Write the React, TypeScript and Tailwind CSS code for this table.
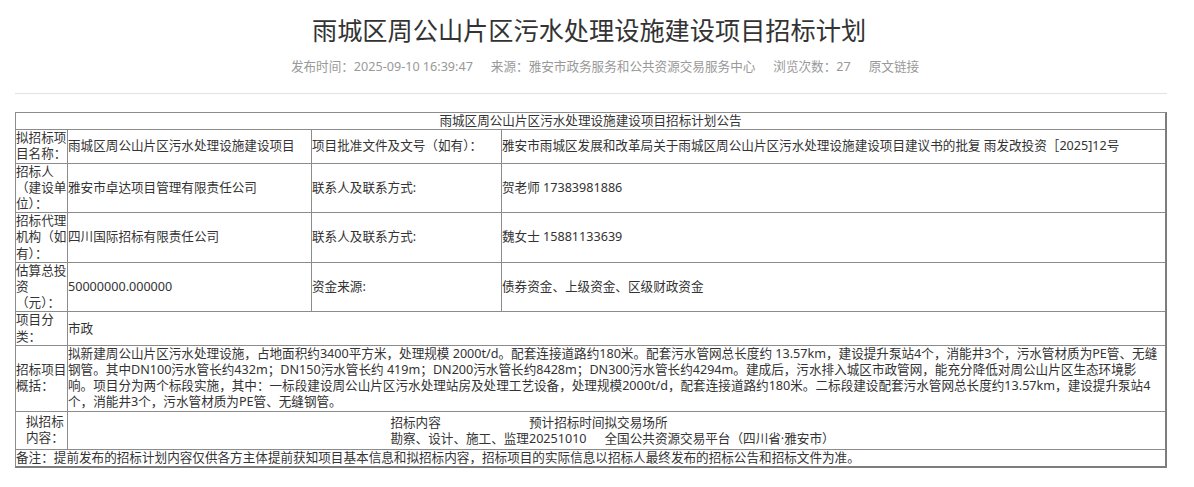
import React from "react";

const FONT = { fontFamily: '"Noto Sans", "Noto Sans CJK SC", sans-serif' };

export default function App() {
  return (
    <div className="w-[1178px] bg-white text-[#333]" style={FONT}>
      <h1 className="pt-[12px] text-center text-[25.2px] leading-[36px] font-normal text-[#333]">
        雨城区周公山片区污水处理设施建设项目招标计划
      </h1>
      <div className="mt-[10px] flex justify-center gap-[18px] pl-[32px] text-[12.6px] leading-[18px] text-[#999]">
        <span>发布时间：2025-09-10 16:39:47</span>
        <span>来源：雅安市政务服务和公共资源交易服务中心</span>
        <span>浏览次数：27</span>
        <span>原文链接</span>
      </div>
      <div className="ml-[15px] w-[1152px]">
        <div className="mt-[17px] h-px bg-[#e3e3e3]" />
        <div className="mt-[18px] grid grid-cols-[52px_244px_190px_1fr] border-l border-t border-[#8c8c8c] border-r-2 border-b-2 border-r-[#7d7d7d] border-b-[#7d7d7d] text-[12.6px] leading-[16.2px] text-[#333]">
          <div className="col-span-4 border-b border-[#8c8c8c] text-center">
            雨城区周公山片区污水处理设施建设项目招标计划公告
          </div>

          <div className="flex items-center border-r border-b border-[#8c8c8c]">拟招标项目名称：</div>
          <div className="flex items-center border-r border-b border-[#8c8c8c]">雨城区周公山片区污水处理设施建设项目</div>
          <div className="flex items-center border-r border-b border-[#8c8c8c]">项目批准文件及文号（如有）：</div>
          <div className="flex items-center border-b border-[#8c8c8c]">
            雅安市雨城区发展和改革局关于雨城区周公山片区污水处理设施建设项目建议书的批复 雨发改投资［2025]12号
          </div>

          <div className="flex items-center border-r border-b border-[#8c8c8c]">招标人（建设单位）：</div>
          <div className="flex items-center border-r border-b border-[#8c8c8c]">雅安市卓达项目管理有限责任公司</div>
          <div className="flex items-center border-r border-b border-[#8c8c8c]">联系人及联系方式:</div>
          <div className="flex items-center border-b border-[#8c8c8c]">贺老师 17383981886</div>

          <div className="flex items-center border-r border-b border-[#8c8c8c]">招标代理机构（如有）：</div>
          <div className="flex items-center border-r border-b border-[#8c8c8c]">四川国际招标有限责任公司</div>
          <div className="flex items-center border-r border-b border-[#8c8c8c]">联系人及联系方式:</div>
          <div className="flex items-center border-b border-[#8c8c8c]">魏女士 15881133639</div>

          <div className="flex items-center border-r border-b border-[#8c8c8c]">估算总投资（元）：</div>
          <div className="flex items-center border-r border-b border-[#8c8c8c]">50000000.000000</div>
          <div className="flex items-center border-r border-b border-[#8c8c8c]">资金来源:</div>
          <div className="flex items-center border-b border-[#8c8c8c]">债券资金、上级资金、区级财政资金</div>

          <div className="flex items-center border-r border-b border-[#8c8c8c]">项目分类：</div>
          <div className="col-span-3 flex items-center border-b border-[#8c8c8c]">市政</div>

          <div className="flex items-center border-r border-b border-[#8c8c8c]">招标项目概括：</div>
          <div className="col-span-3 border-b border-[#8c8c8c] whitespace-nowrap">
            拟新建周公山片区污水处理设施，占地面积约3400平方米，处理规模 2000t/d。配套连接道路约180米。配套污水管网总长度约 13.57km，建设提升泵站4个，消能井3个，污水管材质为PE管、无缝
            <br />
            钢管。其中DN100污水管长约432m；DN150污水管长约 419m；DN200污水管长约8428m；DN300污水管长约4294m。建成后，污水排入城区市政管网，能充分降低对周公山片区生态环境影
            <br />
            响。项目分为两个标段实施，其中：一标段建设周公山片区污水处理站房及处理工艺设备，处理规模2000t/d，配套连接道路约180米。二标段建设配套污水管网总长度约13.57km，建设提升泵站4
            <br />
            个，消能井3个，污水管材质为PE管、无缝钢管。
          </div>

          <div className="flex items-center border-r border-b border-[#8c8c8c] pl-[10px]">拟招标内容：</div>
          <div className="col-span-3 flex items-center justify-center border-b border-[#8c8c8c] pt-[3px] pb-[2px] pr-[8px]">
            <div className="grid grid-cols-[auto_auto_auto]">
              <div>招标内容</div>
              <div>预计招标时间</div>
              <div>拟交易场所</div>
              <div>勘察、设计、施工、监理</div>
              <div>20251010</div>
              <div>全国公共资源交易平台（四川省·雅安市）</div>
            </div>
          </div>

          <div className="col-span-4">
            备注：提前发布的招标计划内容仅供各方主体提前获知项目基本信息和拟招标内容，招标项目的实际信息以招标人最终发布的招标公告和招标文件为准。
          </div>
        </div>
      </div>
    </div>
  );
}
